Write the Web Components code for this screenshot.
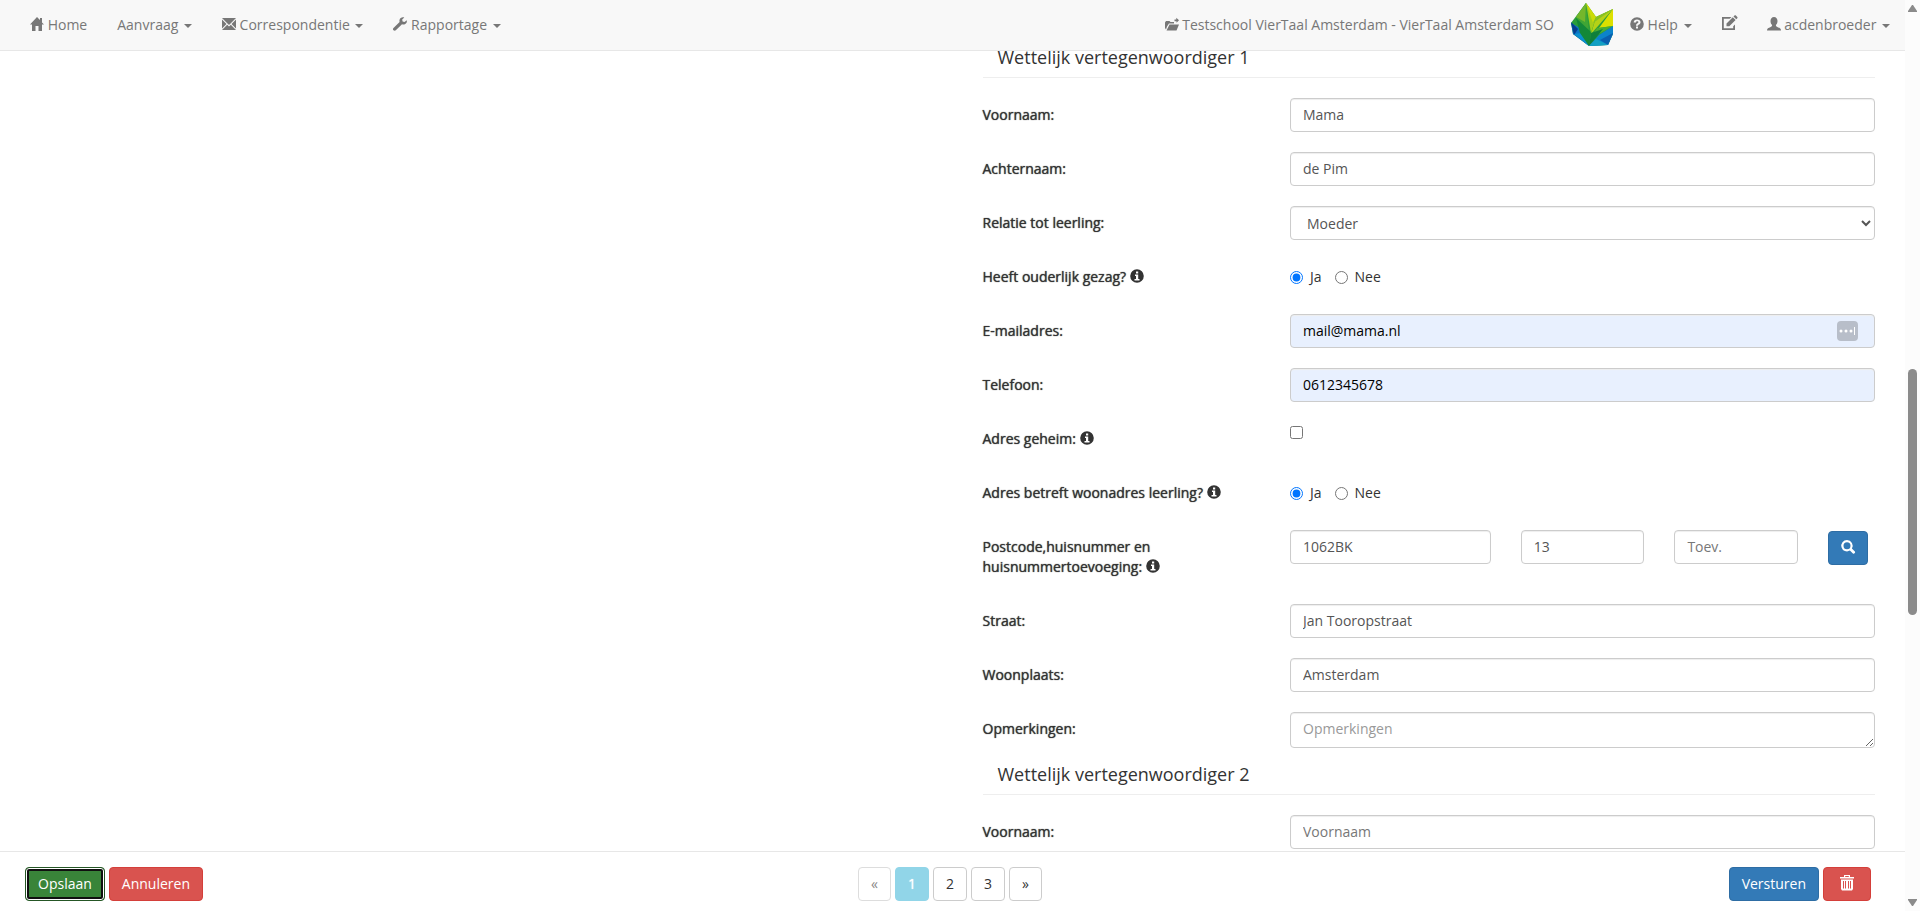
<!DOCTYPE html>
<html lang="nl">
<head>
<meta charset="utf-8">
<title>Aanvraag</title>
<style>
    html, body { height: 100%; margin: 0; }
    body {
        font-family: "Open Sans", "Liberation Sans", sans-serif;
        font-size: 14px;
        line-height: 20px;
        color: #333;
        background: #fff;
        overflow: hidden;
    }
</style>
</head>
<body>
<app-shell>
    <nav-bar slot="top">
        <nav-item icon="home">Home</nav-item>
        <nav-item caret>Aanvraag</nav-item>
        <nav-item icon="envelope" caret>Correspondentie</nav-item>
        <nav-item icon="wrench" caret>Rapportage</nav-item>
        <nav-item slot="right" icon="folder">Testschool VierTaal Amsterdam - VierTaal Amsterdam SO</nav-item>
        <school-logo slot="right"></school-logo>
        <nav-item slot="right" icon="question" caret>Help</nav-item>
        <nav-item slot="right" icon="edit" label="Bewerken"></nav-item>
        <nav-item slot="right" icon="user" caret>acdenbroeder</nav-item>
    </nav-bar>

    <form-section heading="Wettelijk vertegenwoordiger 1">
        <text-field label="Voornaam:" value="Mama"></text-field>
        <text-field label="Achternaam:" value="de Pim"></text-field>
        <select-field label="Relatie tot leerling:" options="Moeder,Vader,Voogd"></select-field>
        <radio-field label="Heeft ouderlijk gezag?" info options="Ja,Nee"></radio-field>
        <text-field label="E-mailadres:" value="mail@mama.nl" autofilled manager></text-field>
        <text-field label="Telefoon:" value="0612345678" autofilled></text-field>
        <check-field label="Adres geheim:" info></check-field>
        <radio-field label="Adres betreft woonadres leerling?" info options="Ja,Nee"></radio-field>
        <postcode-field label="Postcode,huisnummer en huisnummertoevoeging:" info postcode="1062BK" number="13"></postcode-field>
        <text-field label="Straat:" value="Jan Tooropstraat"></text-field>
        <text-field label="Woonplaats:" value="Amsterdam"></text-field>
        <area-field label="Opmerkingen:" placeholder="Opmerkingen"></area-field>
    </form-section>
    <form-section heading="Wettelijk vertegenwoordiger 2">
        <text-field label="Voornaam:" placeholder="Voornaam"></text-field>
    </form-section>

    <action-bar slot="bottom"></action-bar>
</app-shell>

<script>
const ICONS = {
    home: '<path d="M7 0 0 7.500h2V14h3.500V9h3v5H12V7.500h2l-2-2V1h-2v2z"/>',
    envelope: '<path d="M0 1h14L7 8zM0 2.500 4.500 7 0 11.500zM14 2.500v9L9.500 7zM5.200 7.800 7 9.500l1.800-1.700L14 13H0z"/>',
    wrench: '<path d="M13.800 3.200 11.500 5 9.600 4.400 9.200 2.500 11.300.5C9.300-.3 7 .8 6.500 3c-.1.700-.1 1.300.1 1.900L.5 11c-.7.700-.7 1.700 0 2.300s1.600.6 2.300 0L9 7.300c3 .9 5.400-1.300 4.800-4.100z"/>',
    folder: '<path d="M0 5.500 1 4h3.500l1 1H9v1.500H4L2 9.500 1 12.500 0 11zM4.500 7.500H14l-2.500 6h-10zM9.500 2.500h1.800V.8l2.700 2.500-2.500 2.500V4.200h-2z"/>',
    question: '<path fill-rule="evenodd" d="M7 .2a6.800 6.800 0 1 0 0 13.600A6.800 6.800 0 0 0 7 .2zM6 9.500h2v2H6zM3.700 5.600C3.700 3.500 5 2.500 7 2.500s3.500 1 3.500 2.800c0 1.300-.8 1.900-1.500 2.300-.7.400-.9.600-.9 1.200H6c0-1.500.6-2.100 1.500-2.600.6-.4.900-.6.900-1 0-.6-.5-.9-1.200-.9-.8 0-1.200.5-1.200 1.300z"/>',
    edit: '<path d="M9.500 0H0v13h13V7.500l-1.800 1.800v1.900H1.800V1.800h5.900zM4.500 6.500l6.300-6.300 2.800 2.800-6.300 6.300H4.500zM11.500-.5l1-1c.4-.4 1-.4 1.400 0l1.400 1.400c.4.400.4 1 0 1.400l-1 1z"/>',
    user: '<path d="M7 0c2.200 0 3.500 1.700 3.500 4 0 1.800-.7 3.300-1.600 4.100 0 1 .4 1.500 1.400 1.900C12.700 10.900 14 11.500 14 13.500H0c0-2 1.300-2.600 3.700-3.500 1-.4 1.400-.9 1.400-1.900C4.200 7.300 3.500 5.800 3.500 4 3.500 1.700 4.800 0 7 0z"/>',
    info: '<path fill-rule="evenodd" d="M7 .2a6.800 6.800 0 1 0 0 13.600A6.800 6.800 0 0 0 7 .2zM6 2.500h2.200v2H6zM5 5.500h3.200V10H9.500v1.500h-5V10H6V7H5z"/>',
    search: '<path fill-rule="evenodd" d="M6 0a5.700 5.700 0 1 0 2.900 10.600l3 3c.9.900 3-1.100 2-2l-3-3A5.700 5.700 0 0 0 6 0zm0 2.200a3.500 3.500 0 1 1 0 7 3.500 3.500 0 0 1 0-7z"/>',
    trash: '<path fill-rule="evenodd" d="M4 -1h6v2h4v1.500H0V1h4zM5.200 0v1h3.600V0zM1 3.500h12V13l-1 1.500H2L1 13zM3 5v7.500h1V5zM5 5v7.500h1V5zM8 5v7.500h1V5zM10 5v7.500h1V5z"/>'
};

class GlyphIcon extends HTMLElement {
    constructor() {
        super();
        this.attachShadow({ mode: "open" });
    }

    connectedCallback() {
        const name = this.getAttribute("name");
        const size = name === "edit" ? 15 : 14;
        this.shadowRoot.innerHTML = `
            <style>
                :host { display: inline-block; vertical-align: -1px; line-height: 0; }
                svg { fill: currentColor; overflow: visible; }
            </style>
            <svg width="${size}" height="14" viewBox="0 0 ${size} 14" aria-hidden="true">${ICONS[name]}</svg>
        `;
    }
}

class SchoolLogo extends HTMLElement {
    constructor() {
        super();
        this.attachShadow({ mode: "open" });
        this.shadowRoot.innerHTML = `
            <style>
                :host { display: flex; align-items: center; }
                svg { display: block; }
            </style>
            <svg width="46" height="44" viewBox="0 0 46 44" role="img" aria-label="Logo">
                <path fill="#2a9d3a" d="M17 0 27 14 44 6v25l-5 11-19 1L4 31 2 20z"/>
                <path fill="#0b74c4" d="M2 20 11 25 20 43 4 31z"/>
                <path fill="#063f8c" d="M2 19 9 26 5 32z"/>
                <path fill="#0a90cf" d="M5 31 12 30 20 43z"/>
                <path fill="#3fa535" d="M17 0 7 14 12 26 20 30z"/>
                <path fill="#74b72b" d="M17 0 7 14 16 19z"/>
                <path fill="#138838" d="M7 15 22 29 20 43 11 30z"/>
                <path fill="#a5cd1a" d="M17 0 27 14 22 30z"/>
                <path fill="#ccdb08" d="M17 0 27 14 24 20z"/>
                <path fill="#b5d217" d="M44 6 27 14 22 31z"/>
                <path fill="#86c023" d="M44 6 27 14 24 20z"/>
                <path fill="#dde000" d="M44 6v17l-14 2z"/>
                <path fill="#4cae32" d="M44 23 28 25 21 36z"/>
                <path fill="#0f7f3b" d="M22 30 34 26 26 36 20 43z"/>
                <path fill="#0c83cb" d="M44 23v8l-5 11-19 1 10-11z"/>
                <path fill="#0a5fb0" d="M44 30 39 42 31 37z"/>
                <path fill="#12a0c4" d="M27 36 39 42 20 43z"/>
            </svg>
        `;
    }
}

class NavItem extends HTMLElement {
    constructor() {
        super();
        this.attachShadow({ mode: "open" });
    }

    connectedCallback() {
        const icon = this.getAttribute("icon");
        const label = this.getAttribute("label");
        this.shadowRoot.innerHTML = `
            <style>
                :host { display: block; }
                a {
                    display: block;
                    padding: 15px;
                    color: #777;
                    text-decoration: none;
                    white-space: nowrap;
                }
                a:hover { color: #333; }
                .caret {
                    display: inline-block;
                    margin-left: 2px;
                    vertical-align: middle;
                    border-top: 4px solid;
                    border-left: 4px solid transparent;
                    border-right: 4px solid transparent;
                }
            </style>
            <a href="#" ${label ? `aria-label="${label}"` : ""}>${icon ? `<glyph-icon name="${icon}"></glyph-icon>` : ""}${icon && !label ? " " : ""}<slot></slot>${this.hasAttribute("caret") ? ' <span class="caret"></span>' : ""}</a>
        `;
    }
}

class NavBar extends HTMLElement {
    constructor() {
        super();
        this.attachShadow({ mode: "open" });
        this.shadowRoot.innerHTML = `
            <style>
                :host {
                    display: block;
                    background: #f8f8f8;
                    border-bottom: 1px solid #e7e7e7;
                }
                nav { display: flex; justify-content: space-between; padding-left: 15px; }
                div { display: flex; }
            </style>
            <nav>
                <div><slot></slot></div>
                <div><slot name="right"></slot></div>
            </nav>
        `;
    }
}

class PageScroller extends HTMLElement {
    constructor() {
        super();
        this.attachShadow({ mode: "open" });
        this.shadowRoot.innerHTML = `
            <style>
                :host {
                    display: flex;
                    flex-direction: column;
                    align-items: center;
                    box-sizing: border-box;
                    width: 15px;
                    padding: 5px 0;
                    background: #fcfcfc;
                }
                svg { fill: #8b8b8b; }
                .before { flex: 356; }
                .thumb { flex: 246; width: 9px; border-radius: 5px; background: #8b8b8b; }
                .after { flex: 283; }
            </style>
            <svg width="9" height="8" viewBox="0 0 9 8"><path d="M4 0h1l4 6v1H0V6z"/></svg>
            <span class="before"></span>
            <span class="thumb"></span>
            <span class="after"></span>
            <svg width="9" height="8" viewBox="0 0 9 8"><path d="M4 8h1l4-6V1H0v1z"/></svg>
        `;
    }
}

class AppShell extends HTMLElement {
    constructor() {
        super();
        this.attachShadow({ mode: "open" });
        this.shadowRoot.innerHTML = `
            <style>
                :host { display: flex; height: 100vh; }
                .page { flex: 1; min-width: 0; display: flex; flex-direction: column; }
                main { flex: 1; min-height: 0; overflow: hidden; }
                /* scrolled position: the first heading sits partly under the navbar */
                .form {
                    display: flex;
                    flex-direction: column;
                    gap: 15px;
                    width: 50%;
                    box-sizing: border-box;
                    margin: -5px 0 0 auto;
                    padding: 0 15px;
                }
            </style>
            <div class="page">
                <slot name="top"></slot>
                <main><div class="form"><slot></slot></div></main>
                <slot name="bottom"></slot>
            </div>
            <page-scroller></page-scroller>
        `;
    }
}

class FormSection extends HTMLElement {
    constructor() {
        super();
        this.attachShadow({ mode: "open" });
    }

    connectedCallback() {
        this.shadowRoot.innerHTML = `
            <style>
                :host { display: flex; flex-direction: column; gap: 20px; }
                h2 {
                    margin: 0 15px;
                    padding: 0 15px 9px;
                    border-bottom: 1px solid #eee;
                    font-size: 18px;
                    line-height: 22px;
                    font-weight: 400;
                }
            </style>
            <h2>${this.getAttribute("heading")}</h2>
            <slot></slot>
        `;
    }
}

const FIELD_STYLE = `
    :host { display: grid; grid-template-columns: 1fr 2fr; }
    .name, .control { min-width: 0; padding: 0 15px; }
    .name { padding-top: 7px; }
    .name > label, .name > span { text-shadow: 0 0 1px #333; }
    .control { position: relative; }
    input.text, select, textarea {
        display: block;
        box-sizing: border-box;
        width: 100%;
        height: 34px;
        margin: 0;
        padding: 6px 12px;
        border: 1px solid #ccc;
        border-radius: 4px;
        background: #fff;
        box-shadow: inset 0 1px 1px #eee;
        color: #555;
        font: inherit;
    }
    input.text { padding: 5px 12px 7px; }
    ::placeholder { color: #777; opacity: 1; }
    button { font: inherit; cursor: pointer; }
`;

// Base row: label on the left, the control of the subclass on the right
class FormField extends HTMLElement {
    constructor() {
        super();
        this.attachShadow({ mode: "open" });
    }

    connectedCallback() {
        const text = this.getAttribute("label");
        const info = this.hasAttribute("info") ? ' <glyph-icon name="info"></glyph-icon>' : "";
        const name = this.grouped ? `<span id="name">${text}</span>` : `<label for="field">${text}</label>`;
        this.shadowRoot.innerHTML = `
            <style>${FIELD_STYLE}${this.styles()}</style>
            <div class="name">${name}${info}</div>
            <div class="control">${this.control()}</div>
        `;
    }

    styles() {
        return "";
    }

    attr(name) {
        return this.getAttribute(name) || "";
    }
}

class TextField extends FormField {
    styles() {
        return `
            :host([autofilled]) input.text { background: #e8f0fe; color: #000; }
            .manager {
                position: absolute;
                top: 7px;
                right: 32px;
                width: 21px;
                height: 20px;
                padding: 0;
                border: 0;
                border-radius: 4px;
                background: #b8bec9;
            }
            .manager svg { display: block; fill: #fff; }
        `;
    }

    control() {
        const manager = this.hasAttribute("manager") ? `
            <button class="manager" type="button" aria-label="Wachtwoordbeheer">
                <svg width="21" height="20" viewBox="0 0 21 20">
                    <circle cx="4" cy="10" r="1.500"/><circle cx="9" cy="10" r="1.500"/><circle cx="14" cy="10" r="1.500"/>
                    <path d="M17 6h1v8h-1z"/>
                </svg>
            </button>` : "";
        return `<input class="text" id="field" type="text" value="${this.attr("value")}" placeholder="${this.attr("placeholder")}">${manager}`;
    }
}

class SelectField extends FormField {
    control() {
        const options = this.attr("options").split(",").map((o) => `<option>${o}</option>`).join("");
        return `<select id="field">${options}</select>`;
    }
}

class RadioField extends FormField {
    get grouped() {
        return true;
    }

    styles() {
        return `
            .choices { display: flex; gap: 13px; padding-top: 7px; }
            .choices label { display: flex; gap: 7px; }
            .choices input { width: 13px; height: 13px; margin: 4px 0 0; }
            :host { min-height: 34px; }
        `;
    }

    control() {
        const radios = this.attr("options").split(",").map((o, i) => `
            <label><input type="radio" name="choice" ${i === 0 ? "checked" : ""}>${o}</label>`).join("");
        return `<div class="choices" role="radiogroup" aria-labelledby="name">${radios}</div>`;
    }
}

class CheckField extends FormField {
    styles() {
        return `
            :host { min-height: 34px; }
            input { display: block; width: 13px; height: 13px; margin: 4px 0 0; }
        `;
    }

    control() {
        return '<input id="field" type="checkbox">';
    }
}

class PostcodeField extends FormField {
    styles() {
        return `
            :host { min-height: 54px; }
            .parts { display: grid; grid-template-columns: 3fr 2fr 2fr 1fr; margin: 0 -15px; }
            .parts > div { min-width: 0; padding: 0 15px; }
            button {
                width: 40px;
                height: 34px;
                margin: 1px 0 0;
                padding: 0;
                border: 1px solid #2e6da4;
                border-radius: 4px;
                background: #337ab7;
                color: #fff;
            }
        `;
    }

    control() {
        return `
            <div class="parts">
                <div><input class="text" id="field" type="text" value="${this.attr("postcode")}"></div>
                <div><input class="text" type="text" aria-label="Huisnummer" value="${this.attr("number")}"></div>
                <div><input class="text" type="text" aria-label="Toevoeging" placeholder="Toev."></div>
                <div><button type="button" aria-label="Zoeken"><glyph-icon name="search"></glyph-icon></button></div>
            </div>
        `;
    }
}

class AreaField extends FormField {
    styles() {
        return `
            textarea { height: 36px; resize: vertical; overflow: hidden; }
            ::placeholder { color: #999; }
        `;
    }

    control() {
        return `<textarea id="field" placeholder="${this.attr("placeholder")}"></textarea>`;
    }
}

class ActionBar extends HTMLElement {
    constructor() {
        super();
        this.attachShadow({ mode: "open" });
        this.shadowRoot.innerHTML = `
            <style>
                :host {
                    display: grid;
                    grid-template-columns: 1fr auto 1fr;
                    padding: 15px 30px 10px 25px;
                    border-top: 1px solid #e7e7e7;
                    background: #fff;
                }
                div, nav { display: flex; gap: 4px; }
                .end { justify-content: flex-end; padding-right: 4px; }
                button, a {
                    box-sizing: border-box;
                    height: 34px;
                    padding: 6px 12px;
                    border: 1px solid;
                    border-radius: 4px;
                    font: inherit;
                    color: #fff;
                    text-decoration: none;
                    cursor: pointer;
                }
                .save {
                    background: #398439;
                    border-color: #255625;
                    box-shadow: inset 0 0 0 1px #fff, inset 0 0 0 3px #101010;
                }
                .danger { background: #d9534f; border-color: #d43f3a; }
                .primary { background: #337ab7; border-color: #2e6da4; }
                .trash { padding: 6px 16px; }
                a { background: #fff; border-color: #ccc; color: #333; }
                a.off { color: #888; border-color: #ddd; }
                a.current { background: #91d5e8; border-color: #91d5e8; color: #fff; text-shadow: 0 0 1px #fff; }
            </style>
            <div>
                <button class="save" type="button">Opslaan</button>
                <button class="danger" type="button">Annuleren</button>
            </div>
            <nav aria-label="Pagina's">
                <a class="off" href="#">«</a>
                <a class="current" href="#">1</a>
                <a href="#">2</a>
                <a href="#">3</a>
                <a href="#">»</a>
            </nav>
            <div class="end">
                <button class="primary" type="button">Versturen</button>
                <button class="danger trash" type="button" aria-label="Verwijderen"><glyph-icon name="trash"></glyph-icon></button>
            </div>
        `;
    }
}

customElements.define("glyph-icon", GlyphIcon);
customElements.define("school-logo", SchoolLogo);
customElements.define("nav-item", NavItem);
customElements.define("nav-bar", NavBar);
customElements.define("page-scroller", PageScroller);
customElements.define("form-section", FormSection);
customElements.define("text-field", TextField);
customElements.define("select-field", SelectField);
customElements.define("radio-field", RadioField);
customElements.define("check-field", CheckField);
customElements.define("postcode-field", PostcodeField);
customElements.define("area-field", AreaField);
customElements.define("action-bar", ActionBar);
customElements.define("app-shell", AppShell);
</script>
</body>
</html>
